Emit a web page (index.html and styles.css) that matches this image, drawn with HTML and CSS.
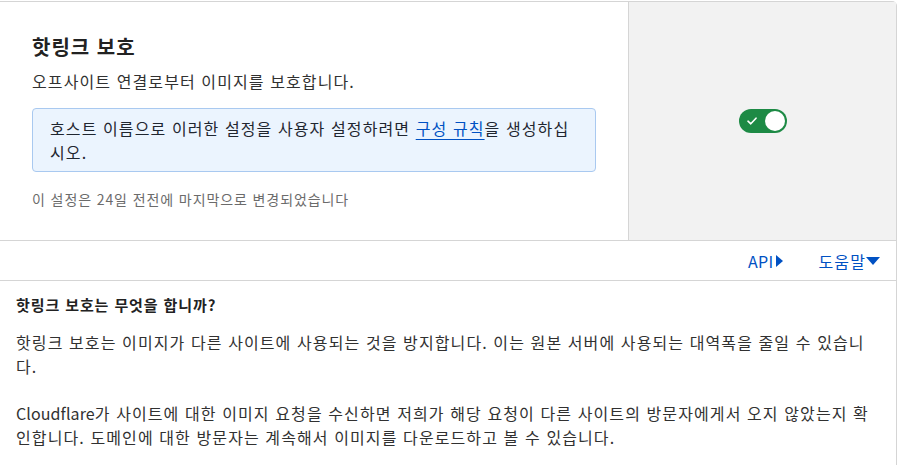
FILE: index.html
```html
<!DOCTYPE html>
<html lang="ko">
<head>
<meta charset="utf-8">
<link rel="stylesheet" href="styles.css">
</head>
<body>
<div class="card">
  <div class="top">
    <div class="main">
      <h2 class="title">핫링크 보호</h2>
      <p class="desc">오프사이트 연결로부터 이미지를 보호합니다.</p>
      <div class="info">호스트 이름으로 이러한 설정을 사용자 설정하려면 <a class="link" href="#">구성 규칙</a>을 생성하십시오.</div>
      <p class="meta">이 설정은 24일 전전에 마지막으로 변경되었습니다</p>
    </div>
    <div class="side">
      <div class="toggle">
        <svg class="check" width="10" height="8" viewBox="0 0 10 8"><path d="M1 4.2 L3.8 6.8 L9 1.2" fill="none" stroke="#fff" stroke-width="1.6" stroke-linecap="round" stroke-linejoin="round"/></svg>
        <span class="knob"></span>
      </div>
    </div>
  </div>
  <div class="bar">
    <a class="tab tab-api" href="#">API<svg width="7" height="12" viewBox="0 0 7 12"><path d="M0 0 L7 6 L0 12 Z" fill="#0051c3"/></svg></a>
    <a class="tab tab-help" href="#">도움말<svg width="14" height="8" viewBox="0 0 14 8"><path d="M0 0 L14 0 L7 8 Z" fill="#0051c3"/></svg></a>
  </div>
  <div class="help">
    <h3 class="help-title">핫링크 보호는 무엇을 합니까?</h3>
    <p class="para">핫링크 보호는 이미지가 다른 사이트에 사용되는 것을 방지합니다. 이는 원본 서버에 사용되는 대역폭을 줄일 수 있습니다.</p>
    <p class="para"><span class="latin">Cloudflare</span>가 사이트에 대한 이미지 요청을 수신하면 저희가 해당 요청이 다른 사이트의 방문자에게서 오지 않았는지 확인합니다. 도메인에 대한 방문자는 계속해서 이미지를 다운로드하고 볼 수 있습니다.</p>
  </div>
</div>
</body>
</html>
```
FILE: styles.css
```css
html, body {
  margin: 0;
  padding: 0;
  background: #fff;
}
body {
  padding-top: 1px;
  font-family: "Noto Sans CJK KR", "Noto Sans", sans-serif;
  color: #313131;
}
.card {
  width: 896px;
  border-top: 1px solid #d5d5d5;
  border-right: 1px solid #d5d5d5;
  border-top-right-radius: 5px;
  height: 470px;
}
.top {
  display: flex;
  height: 238px;
  border-bottom: 1px solid #d5d5d5;
}
.main {
  width: 596px;
  padding: 31px 0 0 32px;
}
.title {
  margin: 0 0 8px;
  font-size: 20px;
  line-height: 28px;
  font-weight: 700;
  letter-spacing: 1px;
  color: #222;
}
.desc {
  margin: 0;
  font-size: 16px;
  line-height: 24px;
  letter-spacing: 1.1px;
  color: #313131;
}
.info {
  margin-top: 15px;
  width: 529px;
  padding: 7px 16px 7px 17px;
  border: 1px solid #a9c9f0;
  border-radius: 4px;
  background: #ebf4fe;
  font-size: 16px;
  line-height: 24px;
  letter-spacing: 1.1px;
  color: #1f2630;
}
.link {
  color: #0051c3;
  text-decoration: underline;
  text-decoration-thickness: 1px;
  text-underline-offset: 4px;
}
.meta {
  margin: 17px 0 0;
  font-size: 14px;
  line-height: 20px;
  letter-spacing: 0.9px;
  color: #6b6b6b;
}
.side {
  flex: 1;
  border-left: 1px solid #d5d5d5;
  background: #f2f2f2;
  display: flex;
  align-items: center;
  justify-content: center;
}
.toggle {
  width: 48px;
  height: 24px;
  border-radius: 12px;
  background: #1d8a45;
  display: flex;
  align-items: center;
  justify-content: space-between;
  padding: 0 2px 0 8px;
  box-sizing: border-box;
}
.knob {
  width: 20px;
  height: 20px;
  border-radius: 50%;
  background: #fff;
}
.bar {
  height: 39px;
  border-bottom: 1px solid #d5d5d5;
  display: flex;
  justify-content: flex-end;
  align-items: center;
  gap: 36px;
  padding-right: 16px;
}
.tab {
  display: flex;
  align-items: center;
  gap: 2px;
  color: #0051c3;
  text-decoration: none;
  font-size: 16px;
  line-height: 20px;
}
.tab-api {
  letter-spacing: 0.3px;
}
.tab-help {
  letter-spacing: 1.1px;
  gap: 0;
}
.help {
  padding: 12px 22px 0 16px;
}
.help-title {
  margin: 0 0 13px;
  font-size: 15px;
  line-height: 24px;
  font-weight: 700;
  letter-spacing: 0.9px;
  color: #222;
}
.para {
  margin: 0 0 23px;
  font-size: 16px;
  line-height: 24px;
  letter-spacing: 1.1px;
  color: #313131;
}
.latin {
  letter-spacing: 0.1px;
}
```
